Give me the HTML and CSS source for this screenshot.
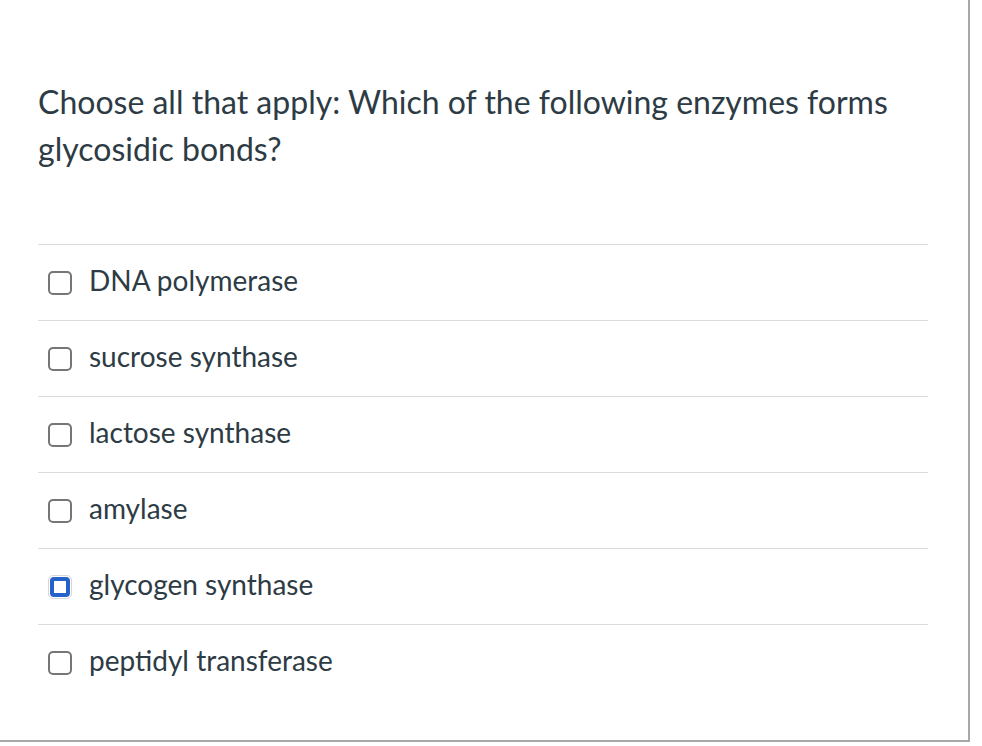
FILE: index.html
```html
<!DOCTYPE html>
<html>
<head>
<meta charset="utf-8">
<link rel="stylesheet" href="styles.css">
</head>
<body>
<div class="frame">
  <div class="question">Choose all that apply: Which of the following enzymes forms glycosidic bonds?</div>
  <ul class="answers">
    <li class="answer"><span class="box"></span><span class="label">DNA polymerase</span></li>
    <li class="answer"><span class="box"></span><span class="label">sucrose synthase</span></li>
    <li class="answer"><span class="box"></span><span class="label">lactose synthase</span></li>
    <li class="answer"><span class="box"></span><span class="label">amylase</span></li>
    <li class="answer"><span class="box focused"></span><span class="label">glycogen synthase</span></li>
    <li class="answer"><span class="box"></span><span class="label">peptidyl transferase</span></li>
  </ul>
</div>
</body>
</html>
```

FILE: styles.css
```css
html, body {
  margin: 0;
  padding: 0;
  background: #ffffff;
}
body {
  font-family: Lato, "Noto Sans", sans-serif;
  color: #2d3b45;
}
.frame {
  box-sizing: border-box;
  width: 970px;
  height: 742px;
  border-right: 2px solid #a8a8a8;
  border-bottom: 2px solid #a8a8a8;
  padding: 78px 0 0 38px;
}
.question {
  width: 880px;
  font-size: 32px;
  line-height: 47px;
}
.answers {
  list-style: none;
  margin: 72px 0 0 0;
  padding: 0;
  width: 890px;
}
.answer {
  box-sizing: border-box;
  height: 76px;
  border-top: 1px solid #dcdcdc;
  display: flex;
  align-items: center;
  padding-left: 10px;
  gap: 17px;
}
.box {
  box-sizing: border-box;
  width: 24px;
  height: 24px;
  border: 2px solid #767676;
  border-radius: 5px;
  flex: none;
}
.box.focused {
  border: 1px solid #d8d8d8;
  border-radius: 5px;
  padding: 1px;
  display: flex;
}
.box.focused::before {
  content: "";
  display: block;
  flex: 1;
  border: 4px solid #2662c9;
  border-radius: 4px;
}
.label {
  font-size: 28px;
  line-height: 32px;
  padding-bottom: 6px;
}
```
